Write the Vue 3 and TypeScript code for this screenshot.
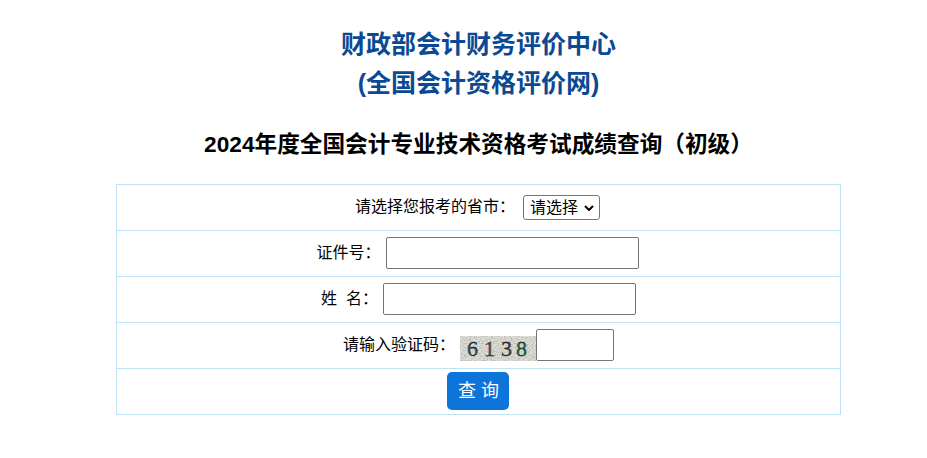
<script setup lang="ts">
const digits = [
  { c: '6', x: 7, color: '#2c5654' },
  { c: '1', x: 24, color: '#5a5268' },
  { c: '3', x: 41, color: '#47434e' },
  { c: '8', x: 56, color: '#2c6a44' },
]
</script>

<template>
  <main class="page">
    <header class="heads">
      <h1 class="org">财政部会计财务评价中心<br />(全国会计资格评价网)</h1>
      <h2 class="title">2024年度全国会计专业技术资格考试成绩查询（初级）</h2>
    </header>
    <table class="form">
      <tbody>
        <tr>
          <td class="nudge">
            <label>请选择您报考的省市：</label>
            <span class="select-wrap">
              <select class="province"><option>请选择</option></select>
              <svg class="chevron" width="10" height="6" viewBox="0 0 10 6" aria-hidden="true">
                <path d="M1 1l4 4 4-4" fill="none" stroke="#000" stroke-width="2" />
              </svg>
            </span>
          </td>
        </tr>
        <tr>
          <td class="nudge">
            <label>证件号：</label>
            <input class="text id" type="text" />
          </td>
        </tr>
        <tr>
          <td>
            <label>姓&nbsp;&nbsp;名：</label>
            <input class="text name" type="text" />
          </td>
        </tr>
        <tr>
          <td>
            <label>请输入验证码：</label>
            <svg class="captcha" width="76" height="25" viewBox="0 0 76 25">
              <filter id="captcha-noise" x="0" y="0" width="100%" height="100%">
                <feTurbulence type="fractalNoise" baseFrequency="0.7" numOctaves="2" seed="7" />
                <feColorMatrix type="matrix" values="0 0 0 0 0.52  0 0 0 0 0.53  0 0 0 0 0.46  5 0 0 0 -2.2" />
              </filter>
              <rect width="76" height="25" fill="#dededa" />
              <rect width="76" height="25" filter="url(#captcha-noise)" />
              <text v-for="d in digits" :key="d.c" :x="d.x" y="20" :fill="d.color" class="digit">{{ d.c }}</text>
            </svg><input class="text code" type="text" />
          </td>
        </tr>
        <tr>
          <td><button class="submit" type="button">查 询</button></td>
        </tr>
      </tbody>
    </table>
  </main>
</template>

<style>
html, body { margin: 0; background: #fff; }
</style>

<style scoped>
.page {
  width: 927px;
  height: 458px;
  overflow: hidden;
  font-family: "Liberation Sans", "Noto Sans CJK SC", sans-serif;
  color: #000;
}
.heads { padding-left: 30px; text-align: center; }
.org {
  margin: 0;
  padding-top: 25px;
  font-size: 25px;
  line-height: 39px;
  font-weight: 700;
  color: #0b4a93;
}
.title {
  margin: 22px 0 0;
  font-size: 22.67px;
  line-height: 39px;
  font-weight: 700;
}
.form {
  width: 725px;
  margin: 20px 0 0 116px;
  border-collapse: collapse;
  table-layout: fixed;
}
td {
  height: 45px;
  padding: 0;
  border: 1px solid #bfe3f5;
  text-align: center;
  font-size: 16px;
  vertical-align: middle;
}
td.nudge { padding-right: 2px; }
label { margin-right: 5px; }
.select-wrap {
  position: relative;
  display: inline-block;
  margin: 0 0 2px 3px;
  vertical-align: middle;
  line-height: 0;
}
.province {
  appearance: none;
  box-sizing: border-box;
  width: 77px;
  height: 25px;
  font-family: inherit;
  font-size: 16px;
  line-height: 23px;
  padding: 0 0 0 6px;
  border: 1px solid #767676;
  border-radius: 3px;
  background: #fff;
  color: #000;
}
.chevron {
  position: absolute;
  left: 61px;
  top: 10px;
  pointer-events: none;
}
.text {
  box-sizing: border-box;
  height: 32px;
  margin-bottom: 2px;
  border: 1px solid #767676;
  border-radius: 2px;
  padding: 0 4px;
  background: #fff;
  vertical-align: middle;
}
.id, .name { width: 253px; }
.code { width: 78px; }
.captcha { margin-top: 6px; vertical-align: middle; }
.digit {
  font-family: "Liberation Serif", "DejaVu Serif", serif;
  font-size: 22px;
  stroke: currentColor;
  stroke-width: 0.3;
}
.submit {
  width: 62px;
  height: 38px;
  margin: 0 1px 2px 0;
  padding: 0 0 3px 1px;
  border: 0;
  border-radius: 5px;
  background: #0d74d9;
  color: #fff;
  font-family: inherit;
  font-size: 18px;
  vertical-align: middle;
}
</style>
